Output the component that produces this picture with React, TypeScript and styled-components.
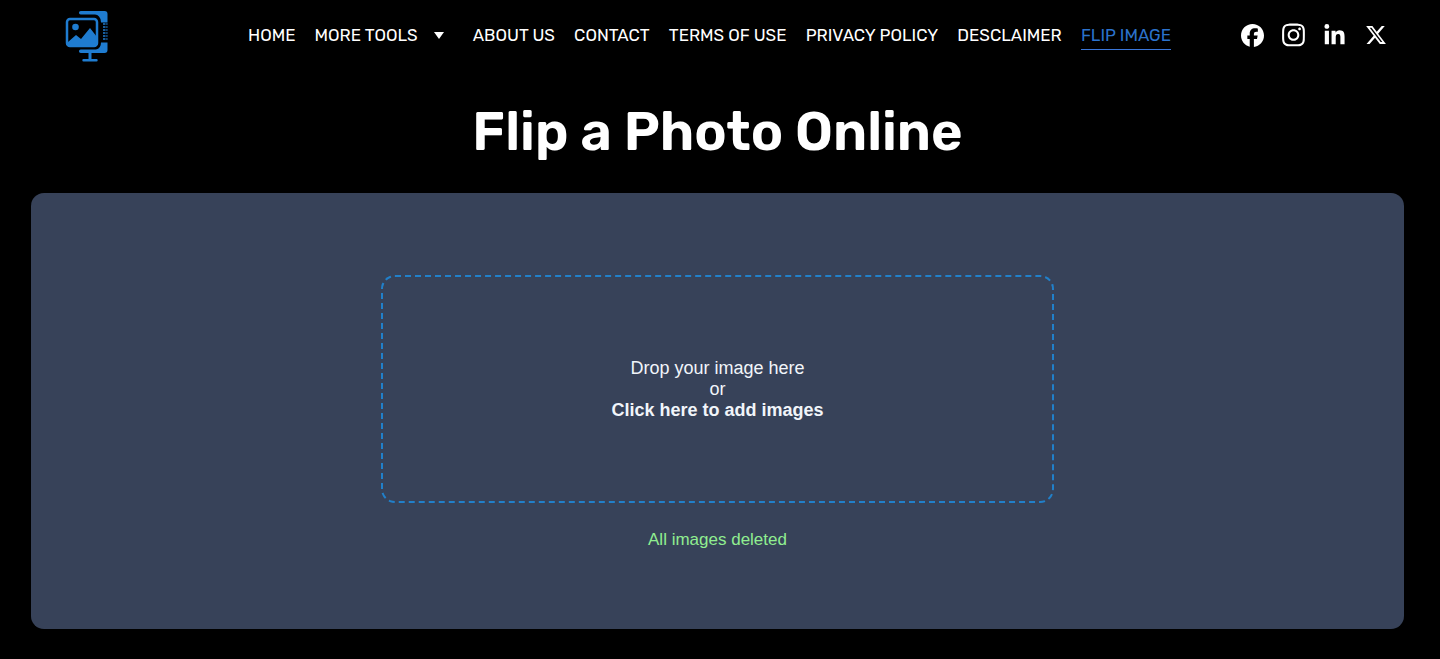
import React, { useState } from "react";
import styled, { createGlobalStyle } from "styled-components";
import { FaFacebook, FaInstagram, FaLinkedinIn, FaXTwitter } from "react-icons/fa6";

const GlobalStyle = createGlobalStyle`
  * { box-sizing: border-box; }
  body {
    margin: 0;
    background: #000;
    color: #fff;
    font-family: Rubik, Roboto, "Liberation Sans", sans-serif;
  }
`;

const Header = styled.header`
  display: flex;
  align-items: center;
  height: 70px;
  padding: 0 52px 0 64px;
`;

const LogoLink = styled.a`
  display: flex;
  margin-right: 138px;
`;

const Nav = styled.nav`
  flex: 0 1 923px;
  display: flex;
  align-items: center;
  justify-content: space-between;
`;

const NavLink = styled.a<{ $active?: boolean }>`
  padding: 4px 0;
  border-bottom: 1px solid ${(p) => (p.$active ? "#3a76d8" : "transparent")};
  color: ${(p) => (p.$active ? "#2b72cc" : "#fff")};
  font-size: 17px;
  line-height: 20px;
  text-decoration: none;
  white-space: nowrap;
`;

const MenuButton = styled.button`
  display: flex;
  align-items: center;
  gap: 16px;
  padding: 4px 10px 4px 0;
  border: 0;
  border-bottom: 1px solid transparent;
  background: none;
  color: #fff;
  font: inherit;
  font-size: 17px;
  line-height: 20px;
  white-space: nowrap;
  cursor: pointer;
`;

const Caret = styled.span`
  margin-top: 2px;
  border: 5px solid transparent;
  border-top: 7px solid #fff;
  border-bottom: 0;
`;

const Social = styled.div`
  display: flex;
  gap: 16px;
  margin-left: auto;
`;

const SocialLink = styled.a`
  display: flex;
  align-items: center;
  justify-content: center;
  width: 25px;
  height: 25px;
  color: #fff;
`;

const Main = styled.main`
  padding: 31px 36px 30px 31px;
`;

const Title = styled.h1`
  margin: 0 0 30px;
  font-size: 54px;
  font-weight: 600;
  line-height: 62px;
  text-align: center;
`;

const Panel = styled.section`
  display: flex;
  flex-direction: column;
  align-items: center;
  padding: 82px 20px 79px;
  border-radius: 13px;
  background: #374259;
  font-family: "Liberation Sans", Arial, sans-serif;
  text-align: center;
`;

const DropZone = styled.button`
  width: 673px;
  max-width: 100%;
  padding: 81px 20px 80px;
  border: 2px dashed #2180ca;
  border-radius: 14px;
  background: none;
  color: #f1f5fa;
  font: inherit;
  font-size: 18px;
  line-height: 21px;
  cursor: pointer;
`;

const Line = styled.span<{ $strong?: boolean }>`
  display: block;
  font-weight: ${(p) => (p.$strong ? 700 : 400)};
`;

const Status = styled.p`
  margin: 26px 0 0;
  color: #90ee90;
  font-size: 17px;
  line-height: 21px;
`;

const Logo = () => (
  <svg width="46" height="54" viewBox="0 0 46 54" fill="#1f7cd0" aria-hidden="true">
    <path d="M16.700 3H40.500q3 0 3 3v8.500H37q0-4-2-6-1.500-2-4-2H16.700a1.750 1.750 0 0 1 0-3.500z" />
    <path d="M16.700 45a1.750 1.750 0 0 1 0-3.500H32q5-1 5-7h6.500V42q0 3-3 3z" />
    <path d="M39 16h4.500M39 19h4.500M39 22h4.500M39 25h4.500M39 28h4.500M39 31h4.500" stroke="#1f7cd0" strokeWidth="1.500" strokeDasharray="2.500 .8" />
    <rect x="3" y="11" width="30" height="27" rx="3" fill="none" stroke="#1f7cd0" strokeWidth="2.500" />
    <circle cx="11.500" cy="19" r="3.300" />
    <path d="M4 34l8-7 5 4 9-11 7 9v8H4z" />
    <path d="M24.500 44h3v7h5a1.200 1.200 0 0 1 0 2.400h-13a1.200 1.200 0 0 1 0-2.400h5z" />
  </svg>
);

const links = ["ABOUT US", "CONTACT", "TERMS OF USE", "PRIVACY POLICY", "DESCLAIMER"];

const socials = [
  { name: "Facebook", icon: <FaFacebook size={23} /> },
  { name: "Instagram", icon: <FaInstagram size={26} /> },
  { name: "LinkedIn", icon: <FaLinkedinIn size={23} /> },
  { name: "X", icon: <FaXTwitter size={22} /> },
];

export default function App() {
  const [open, setOpen] = useState(false);
  return (
    <>
      <GlobalStyle />
      <Header>
        <LogoLink href="#" aria-label="Home page">
          <Logo />
        </LogoLink>
        <Nav>
          <NavLink href="#">HOME</NavLink>
          <MenuButton type="button" aria-expanded={open} onClick={() => setOpen(!open)}>
            MORE TOOLS
            <Caret />
          </MenuButton>
          {links.map((label) => (
            <NavLink key={label} href="#">
              {label}
            </NavLink>
          ))}
          <NavLink href="#" $active aria-current="page">
            FLIP IMAGE
          </NavLink>
        </Nav>
        <Social>
          {socials.map((s) => (
            <SocialLink key={s.name} href="#" aria-label={s.name}>
              {s.icon}
            </SocialLink>
          ))}
        </Social>
      </Header>
      <Main>
        <Title>Flip a Photo Online</Title>
        <Panel>
          <DropZone type="button">
            <Line>Drop your image here</Line>
            <Line>or</Line>
            <Line $strong>Click here to add images</Line>
          </DropZone>
          <Status role="status">All images deleted</Status>
        </Panel>
      </Main>
    </>
  );
}
